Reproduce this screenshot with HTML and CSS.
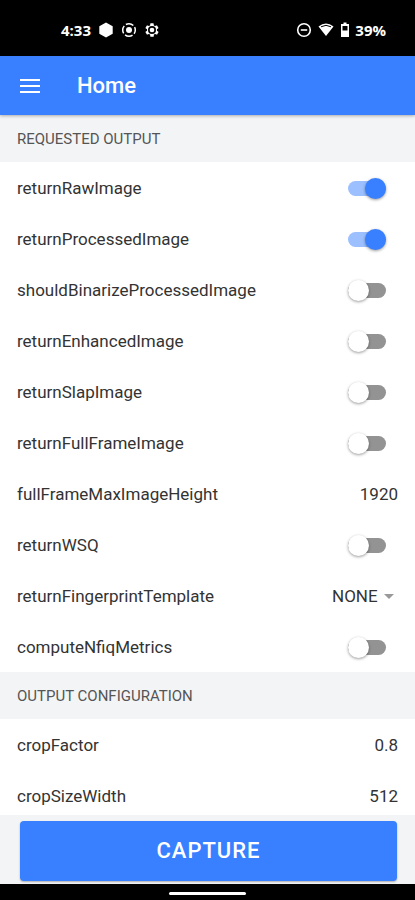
FILE: index.html
```html
<!DOCTYPE html>
<html lang="en">
<head>
<meta charset="utf-8">
<meta name="viewport" content="width=device-width, initial-scale=1">
<title>Home</title>
<link rel="stylesheet" href="styles.css">
</head>
<body>
<div class="status">
  <div class="status-group">
    <span>4:33</span>
    <svg class="icon" viewBox="0 0 16 16"><path d="M8 .5 14.7 4.2V11.8L8 15.5 1.3 11.8V4.2Z" fill="#fff"/></svg>
    <svg class="icon" viewBox="0 0 16 16" fill="none" stroke="#fff"><circle cx="8" cy="8" r="6.3" stroke-width="1.5" stroke-dasharray="7.9 2" stroke-dashoffset="4"/><circle cx="8" cy="8" r="3" fill="#fff" stroke="none"/></svg>
    <svg class="icon" viewBox="0 0 24 24"><path fill="#fff" d="M19.4 13a7.500 7.500 0 0 0 0-2l2.100-1.600a.5.5 0 0 0 .1-.6l-2-3.500a.5.5 0 0 0-.6-.2l-2.500 1a7.300 7.300 0 0 0-1.700-1l-.4-2.600A.5.5 0 0 0 14 2h-4a.5.5 0 0 0-.5.400l-.4 2.700a7.300 7.300 0 0 0-1.700 1l-2.500-1a.5.5 0 0 0-.6.200l-2 3.500a.5.5 0 0 0 .1.600L4.600 11a7.500 7.500 0 0 0 0 2l-2.200 1.600a.5.5 0 0 0-.1.600l2 3.500a.5.5 0 0 0 .6.200l2.500-1a7.300 7.300 0 0 0 1.700 1l.4 2.700a.5.5 0 0 0 .5.400h4a.5.5 0 0 0 .5-.4l.4-2.700a7.300 7.300 0 0 0 1.700-1l2.500 1a.5.5 0 0 0 .6-.2l2-3.500a.5.5 0 0 0-.1-.6ZM12 18a6 6 0 1 1 0-12 6 6 0 0 1 0 12Z"/><circle cx="12" cy="12" r="3.500" fill="#fff"/></svg>
  </div>
  <div class="status-group status-right">
    <svg class="icon" viewBox="0 0 16 16" fill="none" stroke="#fff" stroke-width="1.600"><circle cx="8" cy="8" r="6.300"/><path d="M4.800 8h6.400"/></svg>
    <svg class="icon wifi" viewBox="0 0 18 16"><path d="M1.500 4.500Q9-1.500 16.500 4.500L9 14Z" fill="#fff"/><path d="M4 4.800Q9 1.800 14 4.800" fill="none" stroke="#000" stroke-width="1"/></svg>
    <svg class="icon battery" viewBox="0 0 10 16"><path d="M3.500 .5h3V2H9v13H1V2h2.500Z" fill="#fff"/><path d="M2.500 4h5v4.500h-5Z" fill="#000"/></svg>
    <span>39%</span>
  </div>
</div>
<header class="appbar">
  <button class="menu" type="button" aria-label="Menu"><svg viewBox="0 0 20 14" stroke="#fff" stroke-width="2"><path d="M0 1h20M0 7h20M0 13h20"/></svg></button>
  <h1>Home</h1>
</header>
<main>
  <h2>REQUESTED OUTPUT</h2>
  <div class="list">
    <div class="row"><label for="raw">returnRawImage</label><input class="toggle" id="raw" type="checkbox" checked></div>
    <div class="row"><label for="processed">returnProcessedImage</label><input class="toggle" id="processed" type="checkbox" checked></div>
    <div class="row"><label for="binarize">shouldBinarizeProcessedImage</label><input class="toggle" id="binarize" type="checkbox"></div>
    <div class="row"><label for="enhanced">returnEnhancedImage</label><input class="toggle" id="enhanced" type="checkbox"></div>
    <div class="row"><label for="slap">returnSlapImage</label><input class="toggle" id="slap" type="checkbox"></div>
    <div class="row"><label for="full">returnFullFrameImage</label><input class="toggle" id="full" type="checkbox"></div>
    <div class="row"><label for="maxheight">fullFrameMaxImageHeight</label><input class="value" id="maxheight" type="text" inputmode="numeric" value="1920"></div>
    <div class="row"><label for="wsq">returnWSQ</label><input class="toggle" id="wsq" type="checkbox"></div>
    <div class="row"><label for="template">returnFingerprintTemplate</label><span class="choice"><select id="template"><option>NONE</option></select><svg viewBox="0 0 10 5"><path d="M0 0h10L5 5Z" fill="#999"/></svg></span></div>
    <div class="row"><label for="nfiq">computeNfiqMetrics</label><input class="toggle" id="nfiq" type="checkbox"></div>
  </div>
  <h2>OUTPUT CONFIGURATION</h2>
  <div class="list">
    <div class="row"><label for="crop">cropFactor</label><input class="value" id="crop" type="text" inputmode="decimal" value="0.8"></div>
    <div class="row"><label for="cropwidth">cropSizeWidth</label><input class="value" id="cropwidth" type="text" inputmode="numeric" value="512"></div>
  </div>
</main>
<footer><button class="capture" type="button">CAPTURE</button></footer>
<div class="navbar"><span class="handle"></span></div>
</body>
</html>
```
FILE: styles.css
```css
* { box-sizing: border-box; }
body {
  margin: 0;
  height: 100vh;
  display: flex;
  flex-direction: column;
  background: #fff;
  color: #333;
  font: 17px/24px Roboto, sans-serif;
}
button, input, select { font: inherit; color: inherit; border: 0; background: none; padding: 0; margin: 0; }
svg { display: block; flex: none; }

.status {
  flex: none;
  height: 56px;
  padding: 4px 29px 0 61px;
  display: flex;
  align-items: center;
  justify-content: space-between;
  background: #000;
  color: #fff;
  font-family: "Open Sans", sans-serif;
  font-size: 15px;
  font-weight: 700;
}
.status-group { display: flex; align-items: center; gap: 7px; }
.status-right { gap: 5px; }
.icon { width: 16px; height: 16px; }
.wifi { width: 18px; }
.battery { width: 10px; }

.appbar {
  flex: none;
  height: 59px;
  padding: 0 20px;
  display: flex;
  align-items: center;
  gap: 37px;
  background: #3880ff;
  color: #fff;
  box-shadow: 0 1px 3px rgba(0, 0, 0, .3);
  z-index: 1;
}
.menu svg { width: 20px; height: 14px; }
h1 { margin: 0; font-size: 22px; font-weight: 500; }

main { flex: 1; min-height: 0; overflow-y: auto; scrollbar-width: none; }
h2 {
  margin: 0;
  height: 47px;
  padding: 0 17px;
  display: flex;
  align-items: center;
  background: #f3f4f6;
  color: #555;
  font-size: 15px;
  font-weight: 400;
}
.list { display: flex; flex-direction: column; gap: 1px; padding-top: 1px; }
.row {
  height: 50px;
  padding: 0 17px;
  display: flex;
  align-items: center;
  justify-content: space-between;
}
.value { width: 80px; text-align: right; }
.choice { display: flex; align-items: center; gap: 6px; padding-right: 4px; }
.choice select { appearance: none; }
.choice svg { width: 10px; height: 5px; }

.toggle {
  appearance: none;
  position: relative;
  width: 38px;
  height: 15px;
  margin-right: 12px;
  border-radius: 8px;
  background: #939393;
}
.toggle::before {
  content: "";
  position: absolute;
  left: 0;
  top: -3px;
  width: 21px;
  height: 21px;
  border-radius: 50%;
  background: #fff;
  box-shadow: 0 1px 3px rgba(0, 0, 0, .4);
}
.toggle:checked { background: #9bbfff; }
.toggle:checked::before { left: auto; right: 0; background: #3880ff; }

footer { flex: none; padding: 6px 18px 3px 20px; background: #f3f4f6; z-index: 1; }
.capture {
  display: block;
  width: 100%;
  height: 60px;
  border-radius: 4px;
  background: #3880ff;
  box-shadow: 0 1px 2px rgba(0, 0, 0, .3);
  color: #fff;
  font-size: 22px;
  font-weight: 500;
  letter-spacing: 1px;
}
.navbar { flex: none; height: 16px; display: flex; align-items: center; justify-content: center; background: #000; }
.handle { width: 77px; height: 3px; margin-top: 2px; border-radius: 2px; background: #fff; }
```
